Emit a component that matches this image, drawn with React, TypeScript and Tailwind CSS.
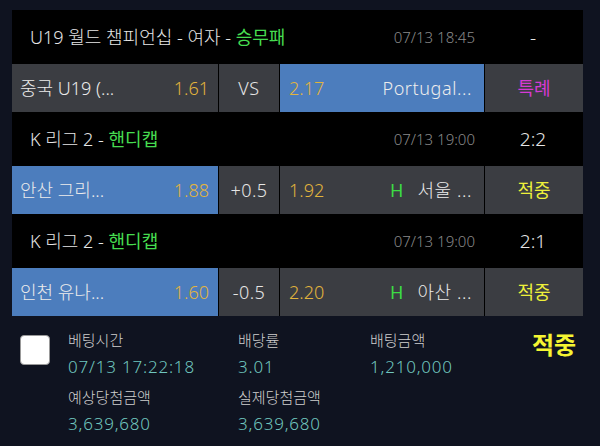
import React from "react";

const FONT = "font-['Noto_Sans','Noto_Sans_CJK_KR',sans-serif]";

type Side = { name: string; odds: string; blue?: boolean };

type Match = {
  league: string;
  kind: string;
  time: string;
  score: string;
  home: Side;
  mid: string;
  away: Side;
  mark?: string;
  result: string;
  resultColor: string;
};

const matches: Match[] = [
  {
    league: "U19 월드 챔피언십 - 여자 - ",
    kind: "승무패",
    time: "07/13 18:45",
    score: "-",
    home: { name: "중국 U19 (...", odds: "1.61" },
    mid: "VS",
    away: { name: "Portugal...", odds: "2.17", blue: true },
    result: "특례",
    resultColor: "text-[#d63ad6]",
  },
  {
    league: "K 리그 2 - ",
    kind: "핸디캡",
    time: "07/13 19:00",
    score: "2:2",
    home: { name: "안산 그리...", odds: "1.88", blue: true },
    mid: "+0.5",
    away: { name: "서울 ...", odds: "1.92" },
    mark: "H",
    result: "적중",
    resultColor: "text-[#eef03a]",
  },
  {
    league: "K 리그 2 - ",
    kind: "핸디캡",
    time: "07/13 19:00",
    score: "2:1",
    home: { name: "인천 유나...", odds: "1.60", blue: true },
    mid: "-0.5",
    away: { name: "아산 ...", odds: "2.20" },
    mark: "H",
    result: "적중",
    resultColor: "text-[#eef03a]",
  },
];

function cellBg(blue?: boolean) {
  return blue ? "bg-[#4c7dbd]" : "bg-[#3b3d42]";
}

function MatchBlock({ m }: { m: Match }) {
  return (
    <div>
      <div className="flex h-[54px] items-center">
        <div className="w-[267px] whitespace-nowrap pl-[18px] text-[18px] text-[#e6e6e6]">
          {m.league}
          <span className="font-normal text-[#46dc50]">{m.kind}</span>
        </div>
        <div className="w-[196px] text-right text-[15px] text-[#8a8a8a]">{m.time}</div>
        <div className="flex-1 pl-[8px] text-center text-[19px] text-[#e6e6e6]">{m.score}</div>
      </div>
      <div className="flex h-[48px] gap-[1px] text-[18px]">
        <div
          className={`flex w-[206px] items-center justify-between pl-[8px] pr-[9px] ${cellBg(m.home.blue)}`}
        >
          <span className="text-[#ececec]">{m.home.name}</span>
          <span className="text-[#e2b43c]">{m.home.odds}</span>
        </div>
        <div className={`flex w-[60px] items-center justify-center tracking-[0.5px] text-[#e6e6e6] ${cellBg()}`}>
          {m.mid}
        </div>
        <div
          className={`flex w-[204px] items-center pl-[9px] pr-[12px] ${cellBg(m.away.blue)}`}
        >
          <span className="text-[#e2b43c]">{m.away.odds}</span>
          <span className="flex-1" />
          {m.mark && <span className="mr-[14px] font-normal text-[#3ddc44]">{m.mark}</span>}
          <span className="tracking-[0.6px] text-[#ececec]">{m.away.name}</span>
        </div>
        <div
          className={`flex flex-1 items-center justify-center font-normal ${m.resultColor} ${cellBg()}`}
        >
          {m.result}
        </div>
      </div>
    </div>
  );
}

function Info({ label, value, w }: { label: string; value: string; w: string }) {
  return (
    <div className={`${w} flex flex-col`}>
      <span className="text-[15px] leading-[20px] text-[#cfcfcf]">{label}</span>
      <span className="mt-[7px] text-[17px] leading-[20px] tracking-[0.8px] text-[#6fc6bf]">
        {value}
      </span>
    </div>
  );
}

export default function App() {
  return (
    <div className={`h-[446px] w-[600px] overflow-hidden bg-[#0f1320] pl-[12px] pt-[10px] font-light ${FONT}`}>
      <div className="w-[571px] bg-black">
        {matches.map((m, i) => (
          <MatchBlock key={i} m={m} />
        ))}
      </div>
      <div className="flex h-[130px] w-[571px] pt-[14px]">
        <div className="ml-[8px] mt-[5px] h-[30px] w-[30px] rounded-[4px] border border-[#999] bg-white" />
        <div className="ml-[18px] flex flex-1 flex-col gap-[10px]">
          <div className="flex">
            <Info w="w-[170px]" label="베팅시간" value="07/13 17:22:18" />
            <Info w="w-[132px]" label="배당률" value="3.01" />
            <Info w="w-[162px]" label="배팅금액" value="1,210,000" />
            <span className="-mt-[3px] text-[24px] font-bold text-[#f5f532]">적중</span>
          </div>
          <div className="flex">
            <Info w="w-[170px]" label="예상당첨금액" value="3,639,680" />
            <Info w="w-[132px]" label="실제당첨금액" value="3,639,680" />
          </div>
        </div>
      </div>
    </div>
  );
}
